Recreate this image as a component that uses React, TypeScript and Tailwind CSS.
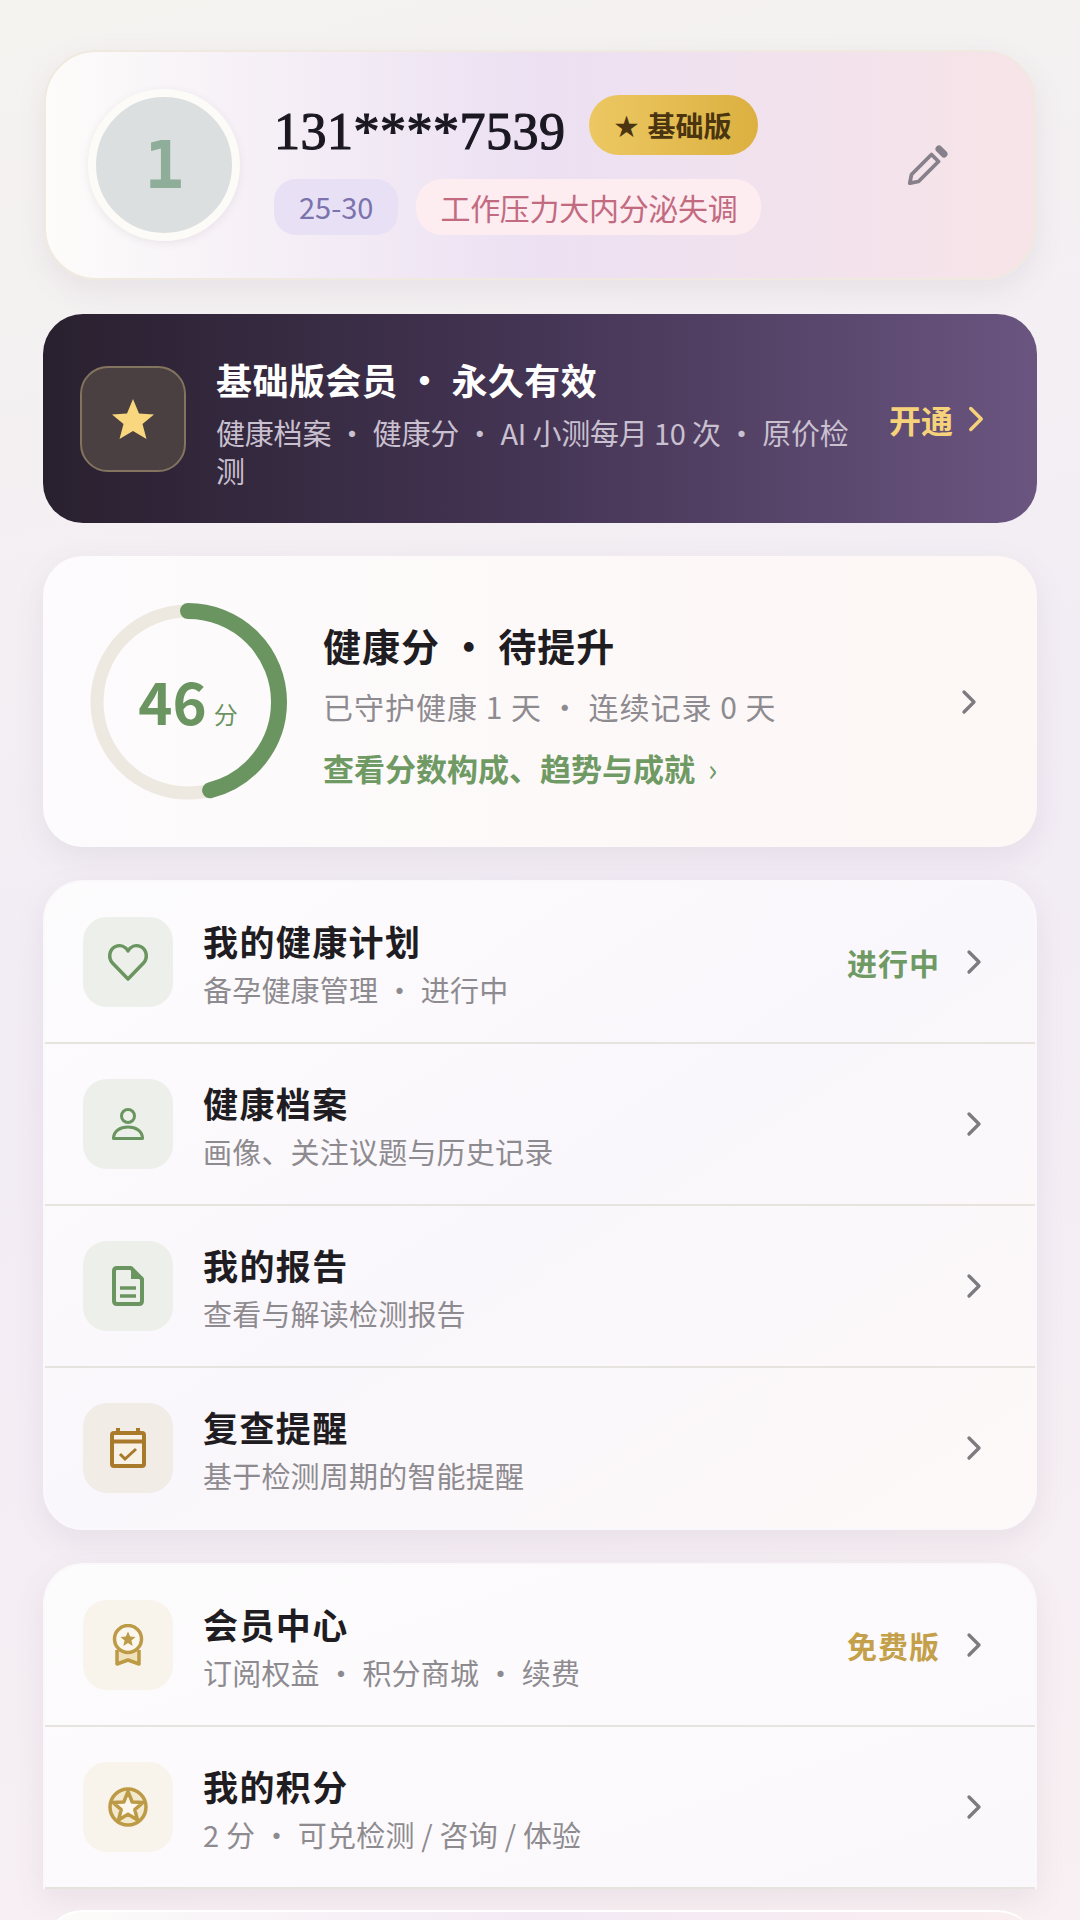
import { ChevronRight } from 'lucide-react';
import type { ReactNode } from 'react';

const GREEN = '#6b9560';
const BROWN = '#a9792c';
const GOLD = '#bd9a45';

function HeartIcon() {
  return (
    <svg width="42" height="40" viewBox="0 0 42 40" fill="none" stroke={GREEN} strokeWidth="3.5">
      <path d="M21 37 L5.5 21 C1 16 2 7.5 8.5 4.5 C13.5 2.5 18.5 4.5 21 9 C23.5 4.5 28.5 2.5 33.5 4.5 C40 7.5 41 16 36.5 21 Z" strokeLinejoin="round" />
    </svg>
  );
}

function PersonIcon() {
  return (
    <svg width="32" height="32" viewBox="0 0 32 32" fill="none" stroke={GREEN} strokeWidth="3">
      <circle cx="16" cy="8" r="6.5" />
      <path d="M1.5 30.5 C1.5 23 8 19 16 19 C24 19 30.5 23 30.5 30.5 Z" strokeLinejoin="round" />
    </svg>
  );
}

function DocIcon() {
  return (
    <svg width="32" height="40" viewBox="0 0 32 40" fill="none" stroke={GREEN} strokeWidth="4">
      <path d="M5 2 H19 L30 13 V35 Q30 38 27 38 H5 Q2 38 2 35 V5 Q2 2 5 2 Z" strokeLinejoin="round" />
      <path d="M19 2 L30 13 H19 Z" fill={GREEN} stroke="none" />
      <path d="M8 22 H24 M8 30 H24" strokeWidth="3.5" />
    </svg>
  );
}

function CalendarIcon() {
  return (
    <svg width="36" height="40" viewBox="0 0 36 40" fill="none" stroke={BROWN} strokeWidth="4">
      <rect x="2" y="5" width="32" height="33" rx="2" fill="#f8f2e6" />
      <path d="M2 13.5 H34 M8 0 V6 M28 0 V6" />
      <path d="M10 26 L15 31 L26 21" strokeWidth="3" />
    </svg>
  );
}

function MedalIcon() {
  return (
    <svg width="32" height="42" viewBox="0 0 32 42" fill="none" stroke={GOLD} strokeWidth="3.5">
      <path d="M5 26 V40 L16 36 L27 40 V26" strokeLinejoin="round" fill="#f0e2bc" />
      <circle cx="16" cy="15" r="13.5" fill="#fbf7ee" />
      <path d="M16 7.5 L18.2 12.6 L23.5 13 L19.4 16.5 L20.7 22 L16 19 L11.3 22 L12.6 16.5 L8.5 13 L13.8 12.6 Z" fill={GOLD} stroke="none" />
    </svg>
  );
}

function PointsIcon() {
  return (
    <svg width="40" height="40" viewBox="0 0 40 40" fill="#f3e9cf" stroke={GOLD} strokeWidth="3.5">
      <circle cx="20" cy="20" r="18" />
      <path d="M20 4.5 L24.2 15 L35 15.5 L26.8 22.6 L29.5 33 L20 27.3 L10.5 33 L13.2 22.6 L5 15.5 L15.8 15 Z" strokeLinejoin="round" fill="#fbf7ee" />
    </svg>
  );
}

function PencilIcon() {
  return (
    <svg width="40" height="40" viewBox="0 0 40 40" fill="none" stroke="#85808a">
      <path d="M1.8 38.2 L3.5 29.5 L23.5 9.5 L30.5 16.5 L10.5 36.5 Z" strokeWidth="3.8" strokeLinejoin="round" />
      <path d="M31 4 L36 9" strokeWidth="7" strokeLinecap="round" />
    </svg>
  );
}

function Row({ icon, iconBg, title, sub, right, rightColor, last }: {
  icon: ReactNode;
  iconBg: string;
  title: string;
  sub: string;
  right?: string;
  rightColor?: string;
  last?: boolean;
}) {
  return (
    <div className={`flex items-center pl-[38px] pr-[41px] ${last ? 'h-[160px]' : 'h-[162px] border-b-2 border-[#e7e3de]'}`}>
      <div className={`flex h-[90px] w-[90px] shrink-0 items-center justify-center rounded-[24px] ${iconBg}`}>
        {icon}
      </div>
      <div className="ml-[30px] flex-1 pt-[2px]">
        <div className="text-[35px] leading-[46px] font-bold tracking-[1.4px] text-[#1f1d22]">{title}</div>
        <div className="mt-[6px] text-[29px] leading-[38px] tracking-[0.2px] text-[#8e8b90]">{sub}</div>
      </div>
      {right && <span className={`mr-[14px] text-[30px] font-bold tracking-[1px] ${rightColor}`}>{right}</span>}
      <ChevronRight size={40} strokeWidth={2} color="#7d7a80" />
    </div>
  );
}

export default function App() {
  return (
    <div
      className="relative flex h-[1920px] w-[1080px] flex-col overflow-hidden bg-[linear-gradient(165deg,#f5f3f0_0%,#f2ecf5_50%,#f8f0f2_100%)] px-[43px] pt-[50px]"
      style={{ fontFamily: '"Noto Sans CJK SC", "Noto Sans", sans-serif' }}
    >
      {/* profile */}
      <div className="mx-[1px] flex h-[230px] shrink-0 items-center rounded-[52px] border-2 border-[#efe9df] bg-gradient-to-r from-[#fdfcfa] via-[#ece0f2] to-[#f7e4e8] pl-[42px] pr-[86px] shadow-[0_10px_30px_rgba(120,100,130,0.1)]">
        <div className="flex h-[152px] w-[152px] shrink-0 items-center justify-center rounded-full border-[8px] border-[#fdfbf8] bg-[#dcdfdf] shadow-[0_2px_8px_rgba(120,100,130,0.12)]">
          <span className="text-[66px] font-bold text-[#8fae9a]" style={{ fontFamily: '"DejaVu Sans Mono", monospace' }}>1</span>
        </div>
        <div className="ml-[34px] flex-1">
          <div className="flex h-[60px] items-center">
            <span className="mt-[13px] text-[52px] leading-[60px] tracking-[0.5px] text-[#1b1822] [-webkit-text-stroke:1.2px_#1b1822]" style={{ fontFamily: '"Liberation Serif", serif' }}>131****7539</span>
            <span className="ml-[23px] flex h-[60px] items-center rounded-full bg-gradient-to-r from-[#ecc862] to-[#dcb040] px-[26px] text-[28px] font-bold text-[#4a3510]">
              <span className="mr-[9px] text-[24px]">★</span>基础版
            </span>
          </div>
          <div className="mt-[24px] flex items-center">
            <span className="flex h-[56px] items-center rounded-[22px] bg-[#e8e0f5] px-[25px] text-[29px] text-[#7a73ad]">25-30</span>
            <span className="ml-[18px] flex h-[56px] items-center rounded-[26px] bg-[#fdecf0] px-[24px] text-[30px] tracking-[-0.3px] text-[#c26a80]">工作压力大内分泌失调</span>
          </div>
        </div>
        <PencilIcon />
      </div>

      {/* membership */}
      <div className="mt-[34px] flex h-[209px] shrink-0 items-center rounded-[40px] bg-gradient-to-r from-[#29202f] via-[#453555] to-[#6a5580] pl-[37px] pr-[40px]">
        <div className="flex h-[106px] w-[106px] shrink-0 items-center justify-center rounded-[28px] border-2 border-[#83745f] bg-[#4a3f41]">
          <svg width="44" height="42" viewBox="0 0 44 42"><path d="M22 1 L28 15.5 L43 16.5 L31.5 26 L35.5 41 L22 33 L8.5 41 L12.5 26 L1 16.5 L16 15.5 Z" fill="#f8d77e" /></svg>
        </div>
        <div className="ml-[30px] flex-1 pt-[8px]">
          <div className="text-[36px] leading-[46px] font-bold tracking-[0.4px] text-white">基础版会员 · 永久有效</div>
          <div className="mt-[11px] text-[29px] leading-[38px] tracking-[-0.2px] text-[#c9c0d0]">健康档案 · 健康分 · AI 小测每月 10 次 · 原价检测</div>
        </div>
        <span className="ml-[28px] text-[32px] font-bold text-[#f6d27a]">开通</span>
        <ChevronRight className="ml-[2px]" size={42} strokeWidth={2} color="#f6d27a" />
      </div>

      {/* score */}
      <div className="mt-[33px] flex h-[291px] shrink-0 items-center rounded-[40px] bg-gradient-to-r from-[#fdfbfd] to-[#fdf7f5] pl-[45px] pr-[48px] shadow-[0_10px_30px_rgba(120,100,130,0.1)]">
        <div className="relative h-[200px] w-[200px] shrink-0">
          <svg width="200" height="200" viewBox="0 0 200 200" className="-rotate-90">
            <circle cx="100" cy="100" r="91" fill="none" stroke="#ede8e0" strokeWidth="13" />
            <circle cx="100" cy="100" r="91" fill="none" stroke={GREEN} strokeWidth="16" strokeLinecap="round" strokeDasharray="263 572" />
          </svg>
          <div className="absolute inset-0 flex items-center justify-center">
            <span className="mb-[3px] text-[58px] leading-none font-bold text-[#6b9560]">46</span>
            <span className="mt-[24px] ml-[7px] text-[24px] leading-none text-[#6b9560]">分</span>
          </div>
        </div>
        <div className="ml-[35px] flex-1 pt-[5px]">
          <div className="text-[38px] leading-[50px] font-bold tracking-[1px] text-[#1f1d22]">健康分 · 待提升</div>
          <div className="mt-[16px] text-[30px] leading-[40px] tracking-[1px] text-[#8e8b90]">已守护健康 1 天 · 连续记录 0 天</div>
          <div className="mt-[22px] text-[31px] leading-[40px] font-bold text-[#6f9a64]">查看分数构成、趋势与成就 <span className="ml-[6px] font-normal">›</span></div>
        </div>
        <ChevronRight size={40} strokeWidth={2} color="#7d7a80" />
      </div>

      {/* main list */}
      <div className="mt-[33px] shrink-0 overflow-hidden rounded-[40px] border-2 border-[#faf8fa] bg-gradient-to-br from-[#fdfcfd] via-[#faf7fc] to-[#fdf9f8] shadow-[0_10px_30px_rgba(120,100,130,0.1)]">
        <Row icon={<HeartIcon />} iconBg="bg-[#edf0ea]" title="我的健康计划" sub="备孕健康管理 · 进行中" right="进行中" rightColor="text-[#6f9a64]" />
        <Row icon={<PersonIcon />} iconBg="bg-[#edf0ea]" title="健康档案" sub="画像、关注议题与历史记录" />
        <Row icon={<DocIcon />} iconBg="bg-[#edf0ea]" title="我的报告" sub="查看与解读检测报告" />
        <Row icon={<CalendarIcon />} iconBg="bg-[#f2ece6]" title="复查提醒" sub="基于检测周期的智能提醒" last />
      </div>

      {/* member list */}
      <div className="mt-[33px] shrink-0 overflow-hidden rounded-t-[40px] border-x-2 border-t-2 border-[#faf8fa] bg-gradient-to-br from-[#fdfcfd] to-[#fbf8fb] shadow-[0_10px_30px_rgba(120,100,130,0.1)]">
        <Row icon={<MedalIcon />} iconBg="bg-[#f8f4ec]" title="会员中心" sub="订阅权益 · 积分商城 · 续费" right="免费版" rightColor="text-[#c4a04a]" />
        <Row icon={<PointsIcon />} iconBg="bg-[#f8f4ec]" title="我的积分" sub="2 分 · 可兑检测 / 咨询 / 体验" />
      </div>

      {/* edge of next card */}
      <div className="mt-[21px] h-[40px] shrink-0 rounded-t-[40px] border-t-2 border-white bg-gradient-to-r from-[#fdfcfa] via-[#f3e9f5] to-[#fbeef0]" />
    </div>
  );
}
